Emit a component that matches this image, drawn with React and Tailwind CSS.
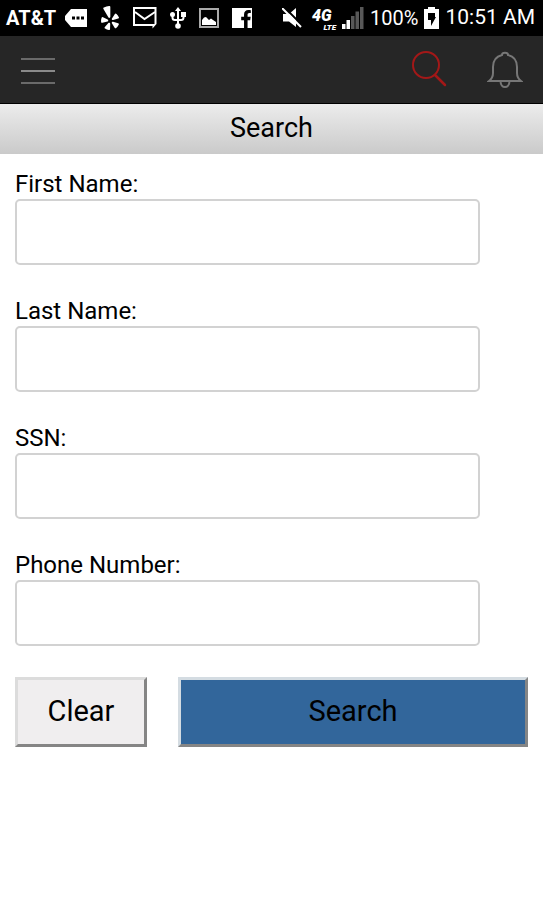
import React, { useState } from 'react';
import { FaFacebookF, FaYelp } from 'react-icons/fa';

const fields = [
  { name: 'firstName', label: 'First Name:', type: 'text' },
  { name: 'lastName', label: 'Last Name:', type: 'text' },
  { name: 'ssn', label: 'SSN:', type: 'text' },
  { name: 'phone', label: 'Phone Number:', type: 'tel' },
];

const emptyForm = { firstName: '', lastName: '', ssn: '', phone: '' };

const MessageIcon = () => (
  <svg width="22" height="18" viewBox="0 0 22 18">
    <path d="M6 0H22V18H6L0 11V7Z" fill="#fff" />
    <path d="M7 7.500h3v3H7zM11.500 7.500h3v3h-3zM16 7.500h3v3h-3z" fill="#000" />
  </svg>
);

const MailIcon = () => (
  <svg width="24" height="22" viewBox="0 0 24 22" fill="none" stroke="#fff" strokeWidth="2">
    <path d="M17 18H1V1H22.500V17" />
    <path d="M2 5L11.500 12L22 5" />
    <path d="M16 17H23.500L19.500 21.500V19H16Z" fill="#fff" stroke="none" />
  </svg>
);

const UsbIcon = () => (
  <svg width="16" height="22" viewBox="0 0 16 22" fill="none" stroke="#fff" strokeWidth="2">
    <path d="M8 3V19M2.500 7V10.500Q2.500 13 5 13H11Q13.500 13 13.500 10.500V7" />
    <path d="M8 0L11 4H5Z" fill="#fff" stroke="none" />
    <circle cx="2.500" cy="7.500" r="2.500" fill="#fff" stroke="none" />
    <path d="M11 5h5v5h-5z" fill="#fff" stroke="none" />
    <circle cx="8" cy="19" r="2.800" fill="#fff" stroke="none" />
  </svg>
);

const PictureIcon = () => (
  <svg width="20" height="20" viewBox="0 0 20 20">
    <rect x="1" y="1" width="18" height="18" fill="none" stroke="#aaa" strokeWidth="2" />
    <path d="M3 17V12L5 9.500L7 9L10 12L12 10.500L14 12L17 14V17Z" fill="#fff" />
  </svg>
);

const MuteIcon = () => (
  <svg width="20" height="20" viewBox="0 0 20 20">
    <path d="M1 6H7L14 0V19L7 13.500H1Z" fill="#fff" />
    <path d="M2 -1L21 18" stroke="#000" strokeWidth="2" />
    <path d="M0 0L19 19" stroke="#fff" strokeWidth="2" />
  </svg>
);

const SignalIcon = () => (
  <svg width="22" height="22" viewBox="0 0 22 22">
    <path d="M0 17h3.500v5H0zM4.500 13H8v9H4.500z" fill="#fff" />
    <path d="M9 9h3.500v13H9zM13.500 4.500H17V22h-3.500zM18 0h3.500v22H18z" fill="#585858" />
  </svg>
);

const BatteryIcon = () => (
  <svg width="15" height="22" viewBox="0 0 15 22">
    <path d="M4 0H11V2H15V22H0V2H4Z" fill="#fff" />
    <path d="M4 6H11V10H12L7 19V13H4Z" fill="#000" />
  </svg>
);

const SearchIcon = () => (
  <svg width="36" height="38" viewBox="0 0 36 38" fill="none" stroke="#a31818" strokeWidth="2">
    <circle cx="15" cy="14" r="13" />
    <path d="M24 24L34 34" strokeWidth="2.500" strokeLinecap="round" />
  </svg>
);

const BellIcon = () => (
  <svg width="36" height="38" viewBox="0 0 36 38" fill="none" stroke="#777" strokeWidth="2">
    <path d="M15 4C15 1 21 1 21 4C27 5.500 30 10 30 16V22Q30 27 34 30H2Q6 27 6 22V16C6 10 9 5.500 15 4Z" />
    <path d="M13.500 30C13.500 38 22.500 38 22.500 30" />
  </svg>
);

const StatusBar = () => (
  <div className="flex h-9 items-center justify-between bg-black pl-1.5 pr-2 text-white">
    <div className="flex items-center gap-[13px]">
      <span className="w-[46px] whitespace-nowrap text-xl font-bold">AT&amp;T</span>
      <MessageIcon />
      <FaYelp className="h-6 w-5" />
      <MailIcon />
      <UsbIcon />
      <PictureIcon />
      <span className="flex h-5 w-5 items-end justify-end bg-white">
        <FaFacebookF className="h-[18px] w-3 text-black" />
      </span>
    </div>
    <div className="flex items-center gap-1.5">
      <MuteIcon />
      <span className="ml-1 flex w-6 flex-col items-end pt-1 font-black italic">
        <span className="w-full text-base leading-[15px]">4G</span>
        <span className="text-[8px] leading-[9px]">LTE</span>
      </span>
      <SignalIcon />
      <span className="text-xl">100%</span>
      <BatteryIcon />
      <span className="whitespace-nowrap text-[21px]">10:51 AM</span>
    </div>
  </div>
);

const NavBar = () => (
  <nav className="flex h-[68px] items-center justify-between border-b border-black bg-[#262626] px-5">
    <button type="button" aria-label="Menu" className="flex w-9 flex-col gap-2.5 px-px pt-0.5">
      <span className="h-0.5 w-full bg-[#6a6a6a]" />
      <span className="h-0.5 w-full bg-[#8a8a8a]" />
      <span className="h-0.5 w-full bg-[#6a6a6a]" />
    </button>
    <div className="flex items-center gap-10">
      <button type="button" aria-label="Search people">
        <SearchIcon />
      </button>
      <button type="button" aria-label="Notifications">
        <BellIcon />
      </button>
    </div>
  </nav>
);

const App = () => {
  const [formData, setFormData] = useState(emptyForm);

  const handleChange = (e) => {
    const { name, value } = e.target;
    setFormData({ ...formData, [name]: value });
  };

  const handleClear = () => {
    setFormData(emptyForm);
  };

  return (
    <div className="min-h-screen bg-white font-['Roboto',sans-serif] text-black">
      <StatusBar />
      <NavBar />
      <h1 className="h-[50px] bg-linear-to-b from-[#ececec] to-[#cacaca] text-center text-[27px] leading-[48px]">
        Search
      </h1>

      <form className="px-[15px] pt-[15px]" onSubmit={(e) => e.preventDefault()}>
        {fields.map((field) => (
          <div key={field.name} className="mb-[31px] pr-12">
            <label htmlFor={field.name} className="block text-2xl leading-[30px]">
              {field.label}
            </label>
            <input
              type={field.type}
              id={field.name}
              name={field.name}
              value={formData[field.name]}
              onChange={handleChange}
              className="block h-[66px] w-full rounded-[5px] border-2 border-[#d2d2d2] bg-white px-3 text-2xl"
            />
          </div>
        ))}

        <div className="flex gap-[31px]">
          <button
            type="button"
            onClick={handleClear}
            className="h-[70px] w-[132px] border-3 border-t-[#dcdcdc] border-r-[#858585] border-b-[#858585] border-l-[#dcdcdc] bg-[#f0eeef] text-[29px]"
          >
            Clear
          </button>
          <button
            type="submit"
            className="h-[70px] flex-1 border-3 border-t-[#d4dce2] border-r-[#858585] border-b-[#858585] border-l-[#d4dce2] bg-[#32669b] text-[29px]"
          >
            Search
          </button>
        </div>
      </form>
    </div>
  );
};

export default App;
